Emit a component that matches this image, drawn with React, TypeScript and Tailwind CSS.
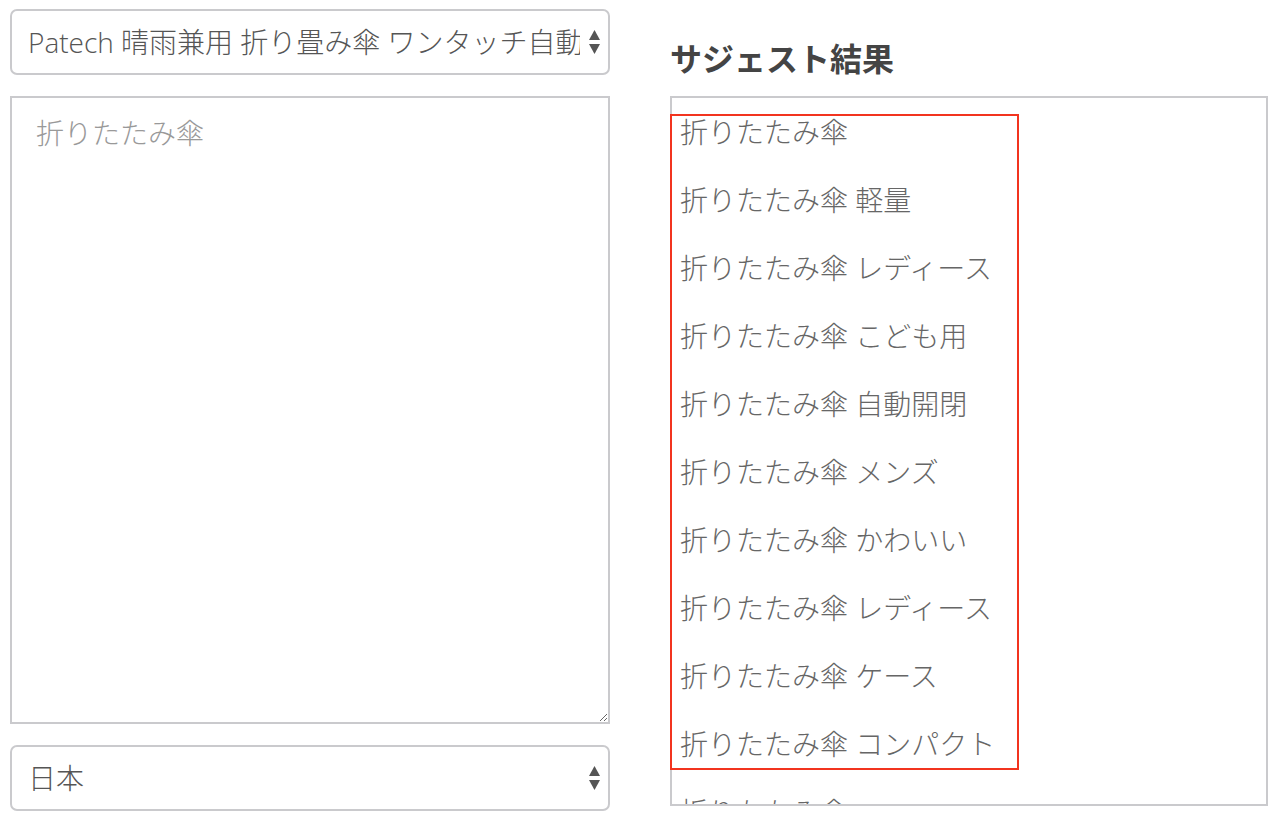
import React from 'react';

const suggestions = [
  '折りたたみ傘',
  '折りたたみ傘 軽量',
  '折りたたみ傘 レディース',
  '折りたたみ傘 こども用',
  '折りたたみ傘 自動開閉',
  '折りたたみ傘 メンズ',
  '折りたたみ傘 かわいい',
  '折りたたみ傘 レディース',
  '折りたたみ傘 ケース',
  '折りたたみ傘 コンパクト',
  '折りたたみ傘',
];

const font = { fontFamily: '"Open Sans", "Noto Sans CJK JP", sans-serif' };

const Arrows: React.FC = () => (
  <svg width="13" height="28" viewBox="0 0 13 28" className="pointer-events-none absolute right-[9px] top-1/2 -translate-y-1/2">
    <path d="M6.5 2 L12 12 L1 12 Z" fill="#555" />
    <path d="M1 16 L12 16 L6.5 26 Z" fill="#555" />
  </svg>
);

const Select: React.FC<{ value: string; options: string[] }> = ({ value, options }) => (
  <div className="relative w-full">
    <select
      defaultValue={value}
      className="w-full h-[66px] appearance-none rounded-[7px] border-2 border-[#cacacd] bg-white pl-[16px] pr-[28px] text-[28px] font-light text-[#555] outline-none text-clip"
      style={font}
    >
      {options.map((o) => (
        <option key={o}>{o}</option>
      ))}
    </select>
    <Arrows />
  </div>
);

export default function App() {
  return (
    <div className="flex w-[1276px] h-[816px] gap-[60px] pl-[10px] pt-[9px] bg-white overflow-hidden" style={font}>
      {/* 入力 */}
      <div className="flex flex-col gap-[21px] w-[600px]">
        <Select value="Patech 晴雨兼用 折り畳み傘 ワンタッチ自動開閉" options={['Patech 晴雨兼用 折り畳み傘 ワンタッチ自動開閉']} />
        <textarea
          placeholder="折りたたみ傘"
          className="w-full h-[628px] border-2 border-[#cacacd] px-[24px] py-[14px] text-[28px] font-light text-[#555] placeholder:text-[#999] outline-none"
          style={font}
        />
        <Select value="日本" options={['日本', 'アメリカ']} />
      </div>

      {/* サジェスト結果 */}
      <div className="relative flex flex-col w-[598px]">
        <h2 className="h-[87px] pt-[26px] text-[32px] font-bold leading-[48px] text-[#444]">サジェスト結果</h2>
        <div className="h-[710px] border-2 border-[#cacacd] overflow-hidden">
          {suggestions.map((s, i) => (
            <div key={i} className="h-[68px] flex items-center pl-[8px] text-[28px] font-light text-[#666] whitespace-nowrap">
              {s}
            </div>
          ))}
        </div>
        <div className="pointer-events-none absolute left-0 top-[105px] w-[349px] h-[656px] border-2 border-[#f2341f]" />
      </div>
    </div>
  );
}
